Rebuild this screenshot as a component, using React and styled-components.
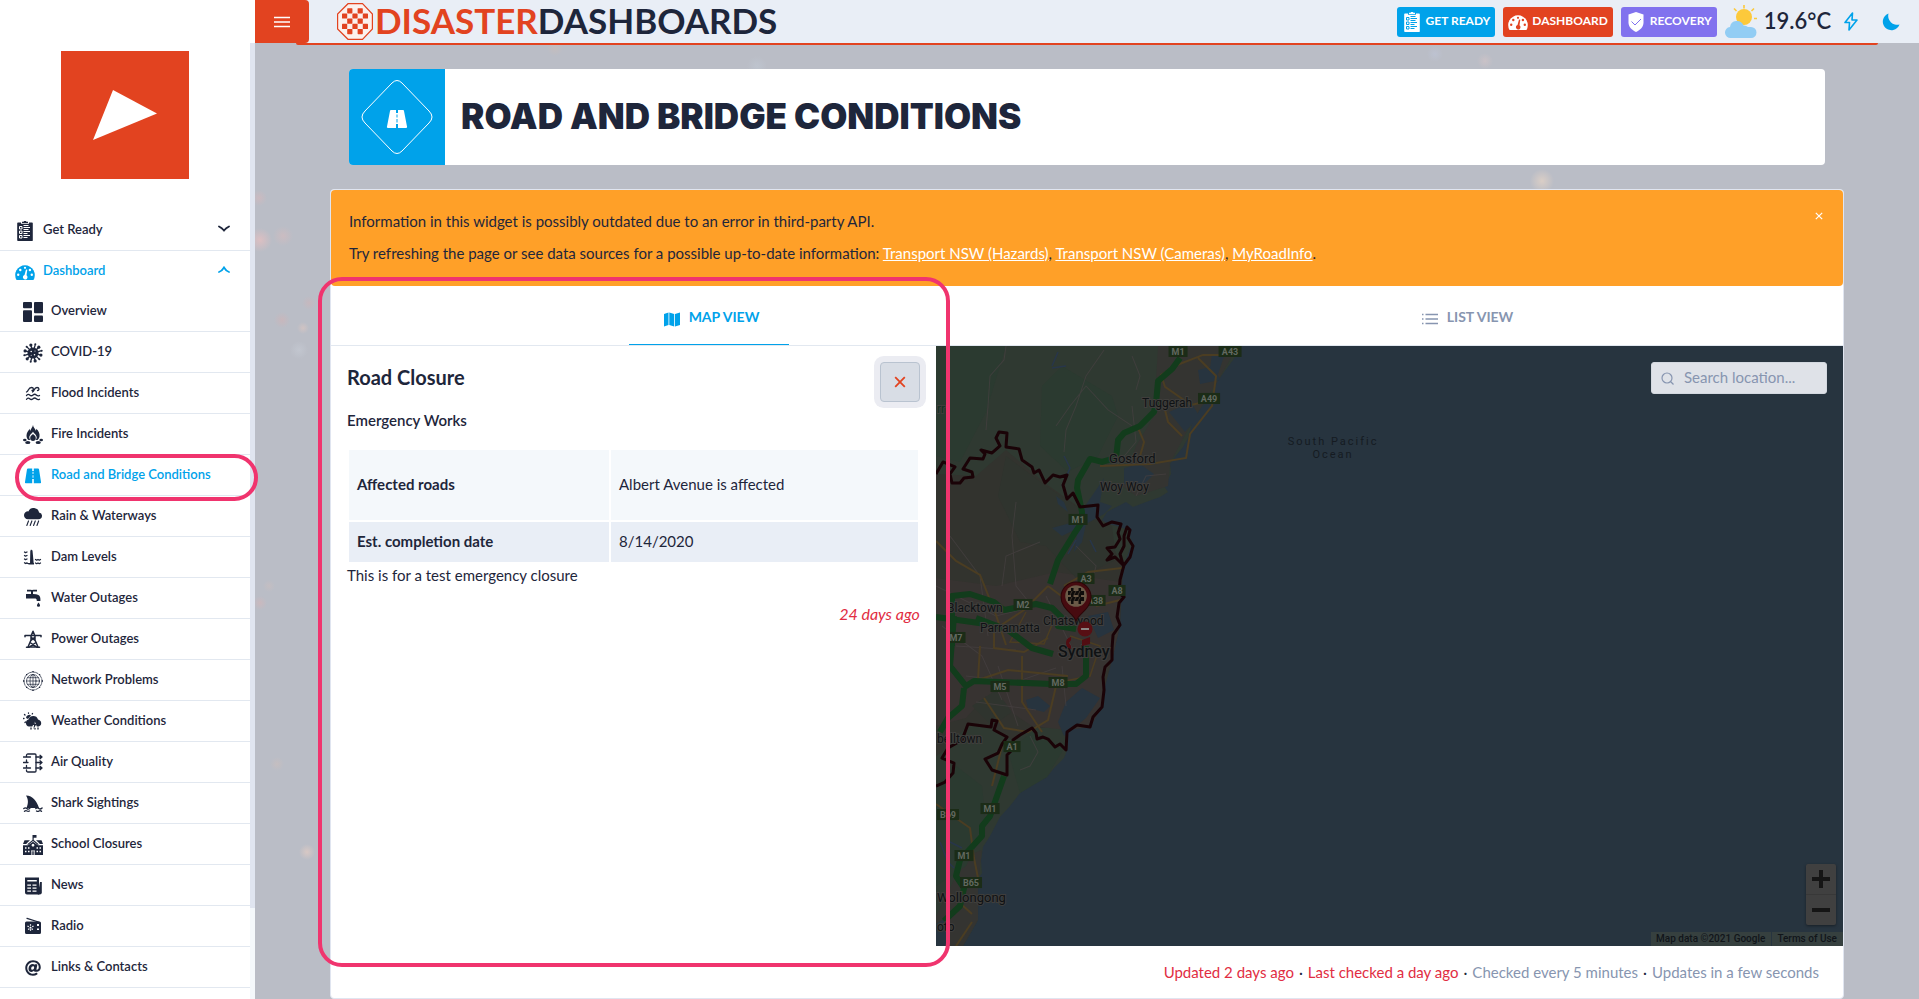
import React from "react";
import styled, { createGlobalStyle, css } from "styled-components";
import { FaAt } from "react-icons/fa";
import { BsCloudRainHeavyFill } from "react-icons/bs";

const c = {
  ink: "#1e263b",
  red: "#e24320",
  blue: "#00a2ea",
  purple: "#8172ee",
  pale: "#e9eef6",
  line: "#e2e8f0",
  muted: "#8795b0",
  danger: "#e12d42",
  orange: "#ffa028",
  pink: "#f0346e",
};

const GlobalStyle = createGlobalStyle`
  *, *::before, *::after { box-sizing: border-box; }
  body {
    margin: 0;
    font-family: Lato, "Liberation Sans", sans-serif;
    font-size: 15px;
    line-height: 20px;
    color: ${c.ink};
  }
  h1, h2, h3, p, ul { margin: 0; padding: 0; }
  ul { list-style: none; }
  button, input { font: inherit; color: inherit; }
  button { border: 0; padding: 0; background: none; cursor: pointer; }
  a { color: inherit; text-decoration: none; }
  svg { display: block; flex: none; }
`;

const Shell = styled.div`
  display: flex;
  height: 100vh;
  overflow: hidden;
`;

/* ---------- sidebar ---------- */
const Sidebar = styled.aside`
  position: relative;
  z-index: 2;
  width: 255px;
  flex: none;
  background: #fff;
`;
const SidebarBody = styled.div`
  display: flex;
  height: 100%;
`;
const SidebarContent = styled.div`
  flex: 1;
  padding-top: 51px;
`;
const Brand = styled.a`
  display: block;
  width: 128px;
  margin: 0 auto 31px;
`;
const ScrollTrack = styled.div`
  width: 5px;
  margin-top: 43px;
  background: #f4f8fb;
`;
const ScrollThumb = styled.div`
  height: calc(90% + 5px);
  background: #e0e5f0;
`;
const NavItem = styled.li`
  position: relative;
  border-bottom: ${(p) => (p.$open ? "0" : `1px solid ${c.line}`)};
`;
const NavLink = styled.a`
  display: flex;
  align-items: center;
  gap: 8px;
  height: 40px;
  padding: 0 20px 2px ${(p) => (p.$top ? "15px" : "23px")};
  font-size: 13px;
  font-weight: 600;
  color: ${(p) => (p.$active ? c.blue : c.ink)};
`;
const NavIcon = styled.span`
  display: flex;
  align-items: center;
  justify-content: center;
  width: 20px;
  height: 20px;
  margin-top: 4px;
`;
const NavText = styled.span`
  flex: 1;
`;

const highlight = css`
  content: "";
  position: absolute;
  border: 4px solid ${c.pink};
  border-radius: 24px;
  pointer-events: none;
  z-index: 5;
`;
const MarkedNavItem = styled(NavItem)`
  &::after {
    ${highlight}
    inset: -1px -8px -6px 15px;
  }
`;

/* ---------- main ---------- */
const Main = styled.div`
  flex: 1;
  min-width: 0;
  background:
    radial-gradient(circle at 5px 240px, #dcbfc2 0, #dcbfc200 12px),
    radial-gradient(circle at 28px 236px, #cbbcc1 0, #cbbcc100 10px),
    radial-gradient(circle at 4px 198px, #cbbac0 0, #cbbac000 8px),
    radial-gradient(circle at 27px 320px, #c8b7bc 0, #c8b7bc00 8px),
    radial-gradient(circle at 48px 328px, #d0c3c3 0, #d0c3c300 6px),
    radial-gradient(circle at 54px 303px, #c6b8be 0, #c6b8be00 7px),
    radial-gradient(circle at 44px 350px, #c2c6cf 0, #c2c6cf00 9px),
    radial-gradient(circle at 5px 603px, #cab9be 0, #cab9be00 7px),
    radial-gradient(circle at 14px 586px, #c4bec2 0, #c4bec200 6px),
    radial-gradient(circle at 52px 852px, #d8c8c4 0, #d8c8c400 8px),
    radial-gradient(circle at 22px 764px, #c5bec0 0, #c5bec000 7px),
    radial-gradient(circle at 1287px 181px, #dacec6 0, #dacec600 12px),
    radial-gradient(circle at 1230px 61px, #cac2c7 0, #cac2c700 8px),
    radial-gradient(circle at 1180px 54px, #bdc2d1 0, #bdc2d100 8px),
    radial-gradient(circle at 502px 66px, #bec4ce 0, #bec4ce00 10px),
    radial-gradient(circle at 300px 48px, #c4bdbe 0, #c4bdbe00 8px),
    #babdc6;
`;
const TopBar = styled.header`
  position: relative;
  display: flex;
  align-items: center;
  height: 43px;
  padding-right: 16px;
  background: ${c.pale};
  &::after {
    content: "";
    position: absolute;
    left: 41px;
    right: 41px;
    top: 100%;
    height: 2px;
    border-radius: 0 0 3px 3px;
    background: ${c.red};
  }
`;
const MenuButton = styled.button`
  display: flex;
  align-items: center;
  justify-content: center;
  width: 54px;
  height: 43px;
  border-radius: 0 4px 4px 0;
  background: ${c.red};
`;
const Wordmark = styled.a`
  display: flex;
  align-items: center;
  gap: 2px;
  margin-left: 28px;
  margin-right: auto;
  font-size: 35px;
  line-height: 38px;
  font-weight: 700;
`;
const WordmarkText = styled.span`
  padding-bottom: 4px;
`;
const Accent = styled.span`
  color: ${c.red};
`;
const HeaderTools = styled.div`
  display: flex;
  align-items: center;
  gap: 8px;
`;
const Pill = styled.a`
  display: flex;
  align-items: center;
  gap: 4px;
  height: 30px;
  padding: 0 5px;
  border-radius: 3px;
  color: #fff;
  background: ${(p) => p.$tone};
  font-size: 12px;
  font-weight: 700;
`;
const PillText = styled.span`
  padding-bottom: 2px;
`;
const Weather = styled.div`
  display: flex;
  align-items: center;
  gap: 7px;
  font-size: 22px;
  font-weight: 600;
`;
const IconButton = styled.button`
  display: flex;
  align-items: center;
  justify-content: center;
  width: 24px;
  height: 30px;
  color: ${c.blue};
  margin-left: ${(p) => (p.$spaced ? "8px" : "0")};
`;

const PageTitle = styled.div`
  display: flex;
  align-items: center;
  margin: 26px 94px 24px;
  border-radius: 4px;
  overflow: hidden;
  background: #fff;
`;
const TitleIcon = styled.div`
  display: flex;
  align-items: center;
  justify-content: center;
  width: 96px;
  height: 96px;
  background: ${c.blue};
`;
const TitleText = styled.h1`
  padding: 0 0 2px 16px;
  font-family: Inter, "Liberation Sans", sans-serif;
  font-size: 35px;
  line-height: 40px;
  font-weight: 900;
`;

const Card = styled.section`
  margin: 0 75px;
  border: 1px solid #e0e5f0;
  border-radius: 4px;
  background: #fff;
`;
const Alert = styled.div`
  display: flex;
  justify-content: space-between;
  align-items: flex-start;
  height: 96px;
  padding: 15px 20px 16px 18px;
  border-radius: 4px;
  background: ${c.orange};
`;
const AlertText = styled.div`
  line-height: 32px;
  a { color: #fff; text-decoration: underline; }
`;
const AlertClose = styled.button`
  display: flex;
  align-items: center;
  height: 22px;
  color: #fff;
`;
const Tabs = styled.div`
  display: grid;
  grid-template-columns: 1fr 1fr;
  justify-items: center;
  height: 60px;
  border-bottom: 1px solid ${c.line};
`;
const Tab = styled.button`
  display: flex;
  align-items: center;
  justify-content: center;
  gap: 9px;
  width: 160px;
  height: 59px;
  padding: 3px 0 0 5px;
  font-size: 14px;
  font-weight: 700;
  color: ${(p) => (p.$active ? c.blue : c.muted)};
  border-bottom: 1px solid ${(p) => (p.$active ? c.blue : "transparent")};
  svg { margin-top: 5px; }
`;
const Split = styled.div`
  display: grid;
  grid-template-columns: 2fr 3fr;
  height: 600px;
`;
const Detail = styled.article`
  position: relative;
  padding: 16px;
  &::after {
    ${highlight}
    inset: -69px -14px -21px -13px;
  }
`;
const DetailHead = styled.div`
  display: flex;
  justify-content: space-between;
  align-items: flex-start;
`;
const DetailTitle = styled.h2`
  font-size: 20px;
  line-height: 30px;
  font-weight: 700;
`;
const CloseButton = styled.button`
  display: flex;
  align-items: center;
  justify-content: center;
  width: 40px;
  height: 40px;
  border: 1px solid #b9c3d0;
  border-radius: 4px;
  background: #d8dde5;
  box-shadow: 0 0 0 6px #ebecf2;
  color: ${c.red};
`;
const DetailSub = styled.h3`
  margin: 8px 0 18px;
  font-size: 15px;
  line-height: 20px;
  font-weight: 600;
`;
const Facts = styled.table`
  width: 100%;
  border-spacing: 2px;
  text-align: left;
`;
const FactRow = styled.tr`
  height: ${(p) => (p.$tall ? "70px" : "40px")};
  background: ${(p) => (p.$tall ? "#f4f8fb" : c.pale)};
  th { width: 260px; font-weight: 700; }
  th, td { padding: 0 8px 2px; }
`;
const Note = styled.p`
  margin-top: 1px;
`;
const Ago = styled.p`
  margin-top: 19px;
  text-align: right;
  font-size: 16px;
  font-style: italic;
  color: ${c.danger};
`;

const MapPane = styled.div`
  position: relative;
  background: #27343f;
  overflow: hidden;
`;
const MapDrawing = styled.svg`
  width: 100%;
  height: 100%;
  font-family: Roboto, sans-serif;
`;
const Search = styled.label`
  position: absolute;
  top: 16px;
  right: 16px;
  display: flex;
  align-items: center;
  gap: 10px;
  width: 176px;
  height: 32px;
  padding: 0 9px;
  border: 1px solid #d3d8df;
  border-radius: 3px;
  background: #dfe2e8;
  color: ${c.muted};
`;
const SearchInput = styled.input`
  flex: 1;
  min-width: 0;
  border: 0;
  padding: 0 0 2px;
  outline: 0;
  background: none;
  &::placeholder { color: ${c.muted}; opacity: 1; }
`;
const ZoomControl = styled.div`
  position: absolute;
  right: 7px;
  bottom: 21px;
  width: 30px;
  border-radius: 2px;
  background: #404040;
  box-shadow: 0 1px 3px #0006;
`;
const ZoomButton = styled.button`
  display: flex;
  align-items: center;
  justify-content: center;
  width: 30px;
  height: 30px;
  & + & { height: 31px; border-top: 1px solid #383838; }
`;
const Attribution = styled.div`
  position: absolute;
  right: 0;
  bottom: 0;
  display: flex;
  gap: 1px;
  font: 500 10px/14px Roboto, sans-serif;
  color: #11151a;
  span, a { padding: 0 6px 0 5px; background: #36403f; }
`;
const Footer = styled.footer`
  display: flex;
  justify-content: flex-end;
  align-items: center;
  gap: 5px;
  height: 52px;
  padding: 0 24px;
`;
const Status = styled.span`
  color: ${(p) => (p.$late ? c.danger : c.muted)};
`;

/* ---------- icons ---------- */
const Svg = ({ s = 20, children, ...rest }) => (
  <svg width={s} height={s} viewBox="0 0 20 20" fill="currentColor" aria-hidden="true" {...rest}>
    {children}
  </svg>
);
const stroke = { fill: "none", stroke: "currentColor", strokeWidth: 1.3, strokeLinecap: "round", strokeLinejoin: "round" };

const Checklist = ({ cut = "#fff" }) => (
  <Svg>
    <path d="M3 1.500h3v1.300h8V1.500h3a.8.800 0 0 1 .8.800v17a.7.700 0 0 1-.8.700H3a.8.800 0 0 1-.8-.800V2.300a.8.800 0 0 1 .8-.800zM7 .800h1.500L9.200 0h1.600l.7.800H13v1.300H7z" />
    <g fill="none" stroke={cut} strokeWidth="1">
      <path d="M4.500 5.500h2.500v2.500h-2.500zM4.500 10h2.500v2.500h-2.500zM4.500 14.500h2.500V17h-2.500z" />
      <path d="M8.500 4.500h5M8.500 6.500h6.500M8.500 8.500h5M8.500 10.500h6.500M8.500 12.500h4M8.500 14.500h6.500M8.500 16.500h4" />
    </g>
  </Svg>
);
const Gauge = ({ cut = "#fff" }) => (
  <Svg>
    <path d="M1.500 18A9.800 9.800 0 1 1 18.500 18z" />
    <g fill={cut}>
      <circle cx="10" cy="5.800" r="1.100" />
      <circle cx="5.300" cy="8" r="1.200" />
      <circle cx="14.900" cy="8" r="1.200" />
      <circle cx="3.200" cy="12.800" r="1.200" />
      <circle cx="16.800" cy="12.800" r="1.200" />
      <path d="M11 7.500l1.300.300-.8 5.500a2.300 2.300 0 1 1-2-.3z" />
    </g>
  </Svg>
);
const Tiles = () => (
  <Svg>
    <rect width="9" height="6.300" rx="1" />
    <rect y="8.300" width="9" height="11.700" rx="1" />
    <rect x="11" width="9" height="11.300" rx="1" />
    <rect x="11" y="13.500" width="9" height="6.500" rx="1" />
  </Svg>
);
const spikes = Array.from({ length: 12 }, (_, i) => {
  const a = (i * Math.PI) / 6 + 0.26;
  const r = i % 2 ? 9 : 8.2;
  return [10 + r * Math.cos(a), 10 + r * Math.sin(a), i % 2 ? 1 : 1.6];
});
const Virus = () => (
  <Svg>
    <circle cx="10" cy="10" r="5.500" />
    {spikes.map(([x, y, r]) => (
      <g key={x + y * 100}>
        <path d={`M10 10L${x} ${y}`} stroke="currentColor" strokeWidth="1.300" />
        <circle cx={x} cy={y} r={r} />
      </g>
    ))}
    <g fill="#fff">
      <circle cx="8.200" cy="8.500" r=".8" />
      <circle cx="12" cy="8" r=".5" />
      <circle cx="11.500" cy="11.800" r=".8" />
      <circle cx="8.200" cy="12.300" r=".5" />
    </g>
  </Svg>
);
const Flood = () => (
  <Svg>
    <g {...stroke}>
      <path d="M3.500 8C6 7 5 3.500 8.500 3.500c2.500 0 2.500 3 .5 3M9.500 8c2-1 1.500-4.500 4.500-4.500 2.500 0 2.500 3 .5 3" />
      <path d="M3.500 11.500q1.600-2 3.200-.5t3.300 0 3.300 0 3.200 .5M3.500 15.300q1.600-2 3.200-.5t3.300 0 3.300 0 3.200.5" />
    </g>
  </Svg>
);
const Fire = () => (
  <Svg>
    <path d="M10 0c.3 2.500 2.200 3.500 2.800 5.700.5-.6.500-1.200.4-1.900 2.300 2 3.800 4.500 3.300 7.700-.2 1.500-1 2.700-2 3.500H5.500c-1.200-1-2-2.300-2-4.200 0-2.700 1.500-4.700 3.200-7 0 .9.100 1.500.6 2C7.800 3.800 9.500 2.500 10 0z" />
    <path d="M10 6.500c.5 1.800 3.700 3.200 3.700 6A3.600 3.600 0 0 1 12.500 15h-5a3.600 3.600 0 0 1-1.200-2.500c0-2.800 3.200-4.200 3.700-6z" fill="#fff" />
    <path d="M10 9c1.500 1.200 2.800 2.200 2.800 4.200 0 1.700-1.200 2.800-2.800 2.800s-2.800-1.100-2.800-2.800C7.200 11.200 8.500 10.200 10 9z" />
    <ellipse cx="1.800" cy="15" rx="1.800" ry="1.300" />
    <ellipse cx="18.200" cy="15" rx="1.800" ry="1.300" />
    <ellipse cx="4.800" cy="17.500" rx="2.600" ry="1.500" />
    <ellipse cx="15.200" cy="17.500" rx="2.600" ry="1.500" />
  </Svg>
);
const Road = () => (
  <Svg>
    <path d="M5 2.500h4.200V5h1.600V2.500H15a1 1 0 0 1 1 .8L18 16a1 1 0 0 1-1 1.300h-6.200V13H9.200v4.300H3A1 1 0 0 1 2 16L4 3.300a1 1 0 0 1 1-.8z" />
    <path d="M9.200 5.800h1.600V8H9.200zM9.200 9.300h1.600v2.500H9.200z" fill="#fff" opacity=".55" />
  </Svg>
);
const Dam = () => (
  <Svg>
    <path d="M7.300 3l.7-1.500 1.500 1 1.300 14H7zM2 15h9v1.500H6z" />
    <path {...stroke} d="M1.500 4l1 .7 1.500-.7M1.500 7.500l1 .7 1.500-.7M1.500 11l1 .7L4 11M1.500 14.800l1 .7 1.500-.7M12.500 11.500l1.200.7 1.300-.7 1.300.7 1.200-.7M12.500 15l1.200.7 1.300-.7 1.300.7 1.200-.7" />
  </Svg>
);
const Tap = () => (
  <Svg>
    <path d="M4 .8h3.500l1.500.3 1.500-.3H14v1.800h-3.500l-.5-.1V5l3 .3c2.700.2 4.400 1.700 4.400 4.500v2.300h-3.600c0-2-.6-2.600-2.300-2.600H3V5h5V2.500l-.5.100H4zM15.500 13.500q3.200 4.200 0 4.200t0-4.200z" />
  </Svg>
);
const Pylon = () => (
  <Svg>
    <path {...stroke} strokeWidth="1.500" d="M8 6l2-4.800L12 6M2 5.500h16M2 5.500v1.300M18 5.500v1.300M8 6v4l-3 7h10l-3-7V6M8 7l4 3.500M12 7l-4 3.500M7 12.500l6 4M13 12.500l-6 4M3.500 17.300h3M13.500 17.300h3" />
  </Svg>
);
const Network = () => (
  <Svg>
    <g {...stroke} strokeWidth=".7">
      <circle cx="10" cy="10" r="6.500" />
      <circle cx="10" cy="10" r="9" strokeDasharray="5 1" />
      <ellipse cx="10" cy="10" rx="3" ry="6.500" />
      <path d="M10 3.500v13M3.500 10h13M4.500 6.700h11M4.500 13.300h11" />
    </g>
    <path d="M9.300 0h1.400v1.300H9.300zM9.300 18.700h1.400V20H9.300zM0 9.300h1.300v1.400H0zM18.700 9.300H20v1.400h-1.300zM3 3h1.200v1.200H3zM16 3h1.200v1.200H16zM3 15.800h1.200V17H3zM16 15.800h1.200V17H16z" />
  </Svg>
);
const Storm = () => (
  <Svg>
    <path d="M6 14.500a3.600 3.600 0 0 1-.5-7A5 5 0 0 1 15 7.500c3.600.5 4.600 5.800.8 7h-2l-2-5-2.500 5zM3 6a3.500 3.500 0 0 1 5-2.800L5 7z" />
    <path d="M11.500 8.500l-2 4.500h1.500l-.5 4 3-5h-1.700z" />
    <path {...stroke} d="M5.500 .8v.5M1.500 2.500l.5.500M.5 6.500H1M9.500 1.500l-.3.500M2 10.500l.5-.5M8 16v1M15 16v1M12 16.500v.5" />
  </Svg>
);
const Air = () => (
  <Svg>
    <g {...stroke}>
      <path d="M3.500 3.500V2.500q0-1.500 1.500-1.500h7q1 0 1 1v16q0 1-1 1H5q-1.500 0-1.500-1.500v-.5" />
      <path d="M.5 4h7M.5 9.500H5M.5 15h7M3.500 7v2.500M3.500 12.500V15M13 4h6M13 9.500h6M13 15h6M17 2.300L19 4l-2 1.700M17 7.800l2 1.700-2 1.700M17 13.300l2 1.700-2 1.700" />
    </g>
  </Svg>
);
const Shark = () => (
  <Svg>
    <path d="M3 1.500c7 .5 10.500 5 13 12.500H3.500C5.500 9 5.500 5.500 3 1.500z" />
    <path {...stroke} d="M.8 14.500q1.600-1.300 3 0t3 0M12.800 14.500q1.500-1.300 3 0t3.300-.5M1.500 17.300q1.300-1 2.500-.3T6.500 17M13.500 17q1.300.8 2.500 0t2.500.3" />
  </Svg>
);
const School = () => (
  <Svg>
    <path d="M9.500 0h4v2.700h-2.800V5l5 4.200-.8.900L10 6l-4.900 4.100-.8-.9L9.500 5zM1.500 5.200H7L3.500 8.500V9H0zM18.500 5.200H13l3.500 3.300V9H20z" />
    <path fillRule="evenodd" d="M0 10.300h5L10 6.800l5 3.500h5V20h-8v-4.500H8V20H0zM2 12.300v1.500h1.500v-1.500zM5 12.300v1.500h1.500v-1.500zM2 15.800v1.500h1.500v-1.500zM5 15.800v1.500h1.500v-1.500zM13.500 12.300v1.500H15v-1.500zM16.500 12.300v1.500H18v-1.500zM13.500 15.800v1.500H15v-1.500zM16.500 15.800v1.500H18v-1.500zM10 8.800a1.400 1.400 0 1 0 .01 0z" />
    <path d="M8.600 16.200h1.100V20H8.600zM10.300 16.200h1.100V20h-1.100z" />
  </Svg>
);
const News = () => (
  <Svg>
    <path fillRule="evenodd" d="M2 1.500h14v17H4a2 2 0 0 1-2-2zM4.300 4v1.500h9.500V4zM4.300 8.500v1.300h3.700V8.500zM9.500 8.500v1.300h4V8.500zM4.300 11.500v1.300h3.700v-1.300zM9.500 11.500v1.300h4v-1.300zM4.300 14.500v1.300h3.700v-1.300zM9.500 14.500v1.300h4v-1.300z" />
    <path d="M17 6h1.800v10.500a2 2 0 0 1-2 2h-2z" />
  </Svg>
);
const Radio = () => (
  <Svg>
    <path {...stroke} d="M4 1.300L15.500 5" />
    <path fillRule="evenodd" d="M3.500 4.500h13A1.500 1.500 0 0 1 18 6v9.500a1.500 1.500 0 0 1-1.500 1.500h-13A1.500 1.500 0 0 1 2 15.500V6a1.500 1.500 0 0 1 1.500-1.500zM14 7v2h2V7zM14 11.500v1.500h2v-1.500z" />
    <path d="M7.500 7.300v7M4.500 9l6 4M10.500 9l-6 4" stroke="#fff" strokeWidth="1.200" strokeDasharray="1.500 1" />
  </Svg>
);
const Chevron = ({ up }) => (
  <svg width="12" height="8" viewBox="0 0 12 8" fill="none" stroke="currentColor" strokeWidth="1.800" strokeLinecap="round" aria-hidden="true">
    <path d={up ? "M1 6q3-1 5-4.500 2 3.500 5 4.500" : "M1 1.500q3 1.500 5 4 2-2.500 5-4"} />
  </svg>
);
const Cross = ({ s }) => (
  <svg width={s} height={s} viewBox="0 0 10 10" stroke="currentColor" strokeWidth="1.500" aria-hidden="true">
    <path d="M1 1l8 8M9 1L1 9" />
  </svg>
);
const BrandMark = () => (
  <svg width="128" height="128" viewBox="0 0 128 128" role="img" aria-label="Home">
    <path fill={c.red} d="M0 0h128v128H0z" />
    <path fill="#fff" d="M52 39l44 23.500-64 26.500z" />
  </svg>
);
const cells = Array.from({ length: 25 }, (_, i) => [i % 5, Math.floor(i / 5)]).filter(([q, r]) => (q + r) % 2 === 1);
const Octagon = () => (
  <svg width="36" height="37" viewBox="0 0 36 37" fill={c.red} aria-hidden="true">
    <path d="M11 .700h14.500L35.400 11v15L25.500 36.300H11L.6 26V11z" fill="#fbf1ee" stroke={c.red} strokeWidth="1.200" />
    {cells.map(([q, r]) => (
      <rect key={`${q}-${r}`} x={5 + q * 5.2} y={5.2 + r * 5.2} width="5.200" height="5.200" rx=".6" />
    ))}
  </svg>
);
const SunCloud = () => (
  <svg width="32" height="34" viewBox="0 0 32 34" aria-hidden="true">
    <path stroke="#fcc93b" strokeWidth="1.600" d="M19 0v3.500M9 3.500l2.500 2.500M29 3.500L26.500 6M32 13.500h-3" />
    <circle cx="19" cy="12" r="8" fill="#fcc93b" />
    <path fill="#92cdf4" d="M6 33a5.500 5.500 0 0 1-1-11 7 7 0 0 1 13.500-1.500A6 6 0 0 1 23 22h3a5.500 5.500 0 0 1 0 11z" />
  </svg>
);
const Shield = () => (
  <Svg>
    <path d="M10 0l7.500 2.500v8c0 4.500-3.300 7.500-7.500 9.500-4.200-2-7.500-5-7.500-9.500v-8z" />
    <path d="M5.500 9.500l3.500 3.500 6-6" fill="none" stroke={c.purple} />
  </Svg>
);
const Bolt = () => (
  <svg width="14" height="19" viewBox="0 0 14 19" fill="none" stroke="currentColor" strokeWidth="1.600" strokeLinejoin="round" aria-hidden="true">
    <path d="M8.500 1L1 10.500h4.500L5 18l8-10H8z" />
  </svg>
);
const Moon = () => (
  <svg width="18" height="18" viewBox="0 0 18 18" fill="currentColor" aria-hidden="true">
    <path d="M6.500 .5a9 9 0 0 0 11 11A8.600 8.600 0 1 1 6.500.5z" />
  </svg>
);
const MapIcon = () => (
  <svg width="16" height="15" viewBox="0 0 16 15" fill="currentColor" aria-hidden="true">
    <path d="M0 2l4.500-1.500V13L0 14.500zM5.300 .5l4.900 1.500v12.500L5.300 13zM11 2l5-1.500V13l-5 1.500z" />
  </svg>
);
const ListIcon = () => (
  <svg width="16" height="12" viewBox="0 0 16 12" stroke="currentColor" strokeWidth="1.300" aria-hidden="true">
    <path d="M0 1.500h1.500M3.500 1.500H16M0 6h1.500M3.500 6H16M0 10.500h1.500M3.500 10.500H16" />
  </svg>
);

/* ---------- map ---------- */
const RouteSign = ({ x, y, t, w = 19 }) => (
  <g>
    <rect x={x - w / 2} y={y - 6} width={w} height="11" fill="#1b2c17" />
    <text x={x} y={y + 3} textAnchor="middle" fontSize="9" fontWeight="700" fill="#626960">{t}</text>
  </g>
);
const Town = ({ x, y, s = 12, children, weight = 400, fill = "#0f1214" }) => (
  <text x={x} y={y} fontSize={s} fontWeight={weight} fill={fill} stroke="#3f3e3c" strokeWidth="2" paintOrder="stroke">
    {children}
  </text>
);
const COAST =
  "M0 0H306L297 14 288 26 281 36 276 50 266 60 257 74 252 92 247 101 238 112 234 118 235 128 228 140 232 146 224 151 210 156 197 161 190 156 171 166 165 176 184 181 192 184 196 197 192 208 187 221 184 247 182 262 184 279 177 292 177 301 175 316 167 331 168 344 166 357 157 371 154 381 141 379 131 386 132 402 128 412 118 422 111 431 98 438 84 447 74 460 64 471 54 490 47 501 45 515 46 527 38 540 36 561 42 574 34 588 27 600H0Z";
const BOUNDARY =
  "M0 128L7 116 19 121 14 128 16 137 24 137 28 132 37 131 36 126 27 123 34 112 47 113 49 108 45 104 56 107 64 100 60 92 63 86 71 87 70 101 83 103 86 114 96 121 98 127 103 124 109 137 117 129 124 131 131 129 127 139 131 153 137 147 144 161 162 159 161 171 167 180 176 176 185 178 182 187 184 193 179 201 171 202 176 208 171 214 179 211 187 219 184 208 188 200 188 190 191 181 194 184 192 192 197 200 194 211 188 219 184 234 183 247 188 251 183 257 181 271 184 279 177 289 176 302 176 314 169 321 167 331 168 344 166 361 157 371 154 381 141 379 131 386 130 404 124 398 119 401 112 393 107 391 101 393 100 387 96 382 84 389 77 394 79 401 71 409 71 429 56 424 49 413 62 407 66 398 71 391 58 384 61 375 56 374 55 381 32 378 26 394 12 402 6 412 18 417 17 427 9 436 0 440";
const CoastMap = () => (
  <MapDrawing viewBox="0 0 907 600" preserveAspectRatio="xMidYMid slice" role="img" aria-label="Map of Sydney region">
    <path fill="#27343f" d="M0 0h907v600H0z" />
    <path fill="#2f3931" d={COAST} />
    <path fill="#32332e" d="M0 128L40 130 70 104 110 138 144 162 167 182 187 221 184 279 176 314 168 344 154 381 96 382 77 394 55 381 32 378 12 402 0 410Z" />
    <path fill="#373331" d="M0 232L60 240 120 226 184 236 184 279 176 314 167 331 166 361 154 381 130 384 96 380 50 350 30 372 0 380Z" />
    <path fill="#343431" d="M222 0H302L281 36 257 74 234 117 232 140 200 150 186 140 200 100 218 70ZM0 570L30 510 46 504 42 540 42 574 27 600H0Z" />
    <path fill="#2b3a30" d="M0 0H70L50 66 24 116 0 110ZM106 40L126 20 176 50 182 70 162 110 132 126 104 100ZM0 440L20 420 46 440 50 480 30 520 0 540ZM72 405L96 386 128 402 111 431 84 447Z" />
    <path fill="#2f342e" d="M70 110L110 140 140 160 176 180 180 214 140 232 110 200 84 196 62 150ZM36 360L60 344 76 366 56 380Z" />
    <g fill="#27343f">
      <path d="M233 66L255 56 263 70 249 86ZM188 122L204 118 218 128 206 140 188 138ZM262 24L278 20 284 34 264 38ZM276 8L288 10 282 28 274 22Z" />
      <path d="M130 356L146 342 164 352 150 372 128 390 122 376ZM90 354L102 350 114 360 108 366 92 362ZM152 270L172 266 178 284 162 292ZM0 578L12 570 10 600H0Z" />
      <path d="M160 144L168 132 164 156 176 160 168 168 150 178 146 196 138 206 142 182 126 190 116 182 138 176ZM120 150L128 156 132 166 122 158Z" />
    </g>
    <g fill="none" stroke="#28364a" strokeWidth="1.500">
      <path d="M116 20l6-14M116 22l14-2M128 110l6 12-8 18M4 496l8 20 6 6M10 494l16 8M132 208l8-14M160 206l-6-12" />
    </g>
    <g fill="none" stroke="#474142" strokeWidth="1" opacity=".7">
      <path d="M70 0L68 14 54 30 52 60 50 84M120 80L134 60 150 40 172 64 196 80M196 10L204 30 200 44M128 106L130 84 140 60 150 30 168 4M14 190L44 230 52 290M80 156L76 190 80 240 96 260M0 240L60 270 100 260M140 200L160 220 156 236M30 330L80 336 120 322M94 390L102 406 94 420 84 424M20 300L80 304" />
      <path d="M62 320L82 380M126 320L130 360M40 356L100 364M110 250L140 310M6 280L46 310 66 354M104 196L70 210 66 240M180 120L200 96 196 60M200 150L210 130 230 128" />
    </g>
    <g fill="none" stroke="#4b3d22" strokeWidth="2">
      <path d="M297 9H267L241 19 225 29 229 41 255 59 273 55M262 12L280 30 276 60 254 88 250 112 214 118 164 120M228 60L232 76 246 90M202 82L208 96 204 110M0 195L20 215 44 229 60 269 70 299M112 240L128 252M112 240L88 264 58 284V302L88 306 112 292M186 222L152 226 128 240M160 260L184 254M44 300L42 334 72 324 132 330M86 310V356L106 386M120 340L112 374 92 386 68 382 48 352M0 458L34 482 38 512 44 542M36 576L20 600M14 548L36 568M66 400L56 440" />
      <path d="M90 266L74 296 108 298 118 274M134 290L164 300 154 330 114 338" strokeWidth="1.500" />
    </g>
    <g fill="none" stroke="#123c1c" strokeWidth="6" strokeLinejoin="round">
      <path d="M244 12L236 23 222 35 220 57 218 66 204 80 188 87 182 94 180 112 166 116 154 113 142 134 141 142 146 166V176L138 188 122 214 114 238" />
      <path d="M0 271L50 278M16 300V250L34 248 58 256 68 264 100 258 116 262 126 272 122 280 140 283M40 272L72 284 96 302 117 308" />
      <path d="M18 270L14 320 30 340 38 335 116 338 140 338 150 330V300M28 342L26 360 12 372 4 386M68 430L54 470 46 480V490L24 514 20 530 28 542 24 560 8 575" />
    </g>
    <path d={BOUNDARY} fill="none" stroke="#1a0307" strokeWidth="3" strokeLinejoin="round" />
    <RouteSign x={242} y={6} t="M1" />
    <RouteSign x={294} y={6} t="A43" w={23} />
    <RouteSign x={273} y={53} t="A49" w={22} />
    <RouteSign x={142} y={174} t="M1" />
    <RouteSign x={150} y={233} t="A3" w={17} />
    <RouteSign x={181} y={245} t="A8" w={17} />
    <RouteSign x={159} y={255} t="A38" w={21} />
    <RouteSign x={87} y={259} t="M2" />
    <RouteSign x={20} y={292} t="M7" />
    <RouteSign x={64} y={341} t="M5" />
    <RouteSign x={122} y={337} t="M8" />
    <RouteSign x={76} y={401} t="A1" w={17} />
    <RouteSign x={54} y={463} t="M1" />
    <RouteSign x={12} y={469} t="B69" w={22} />
    <RouteSign x={28} y={510} t="M1" />
    <RouteSign x={35} y={537} t="B65" w={22} />
    <Town x={206} y={61}>Tuggerah</Town>
    <Town x={173} y={117} s={13}>Gosford</Town>
    <Town x={164} y={145}>Woy Woy</Town>
    <Town x={11} y={266}>Blacktown</Town>
    <Town x={44} y={286}>Parramatta</Town>
    <Town x={107} y={279}>Chatswood</Town>
    <Town x={122} y={311} s={16} weight={500}>Sydney</Town>
    <Town x={1} y={397}>belltown</Town>
    <Town x={1} y={556} s={13}>Wollongong</Town>
    <Town x={1} y={585}>oto</Town>
    <Town x={1} y={67} fill="#12301f">rr</Town>
    <g fill="#151b22" fontSize="11" textAnchor="middle" letterSpacing="2">
      <text x="397" y="99">South Pacific</text>
      <text x="397" y="112">Ocean</text>
    </g>
    <g fill="#520d12">
      <path d="M130 297a6 6 0 0 1 5-6v3l-2 3 2 3v3a6 6 0 0 1-5-6zM146 294l8-3v7l-8 2z" />
      <circle cx="149" cy="283" r="7.500" fill="#570f14" />
      <path d="M145 282h8v2h-8z" fill="#8a8583" />
      <path fill="#470b10" stroke="#2c0608" d="M140 275c-2-7-15-12-15-24a15 15 0 0 1 30 0c0 12-13 17-15 24z" />
      <circle cx="140" cy="250" r="10.800" fill="#6b5a47" />
      <path fill="#0e0c0b" d="M132 245h16v4h-16zM132 251h16v4h-16zM135 242h2.500v16H135zM142.500 242h2.500v16h-2.500z" />
      <path stroke="#6b5a47" strokeWidth=".6" d="M134 249l2-4M138 249l2-4M142 249l2-4M134 255l2-4M138 255l2-4M142 255l2-4" />
    </g>
  </MapDrawing>
);

const items = [
  ["Overview", <Tiles />],
  ["COVID-19", <Virus />],
  ["Flood Incidents", <Flood />],
  ["Fire Incidents", <Fire />],
  ["Road and Bridge Conditions", <Road />, true],
  ["Rain & Waterways", <BsCloudRainHeavyFill size={18} />],
  ["Dam Levels", <Dam />],
  ["Water Outages", <Tap />],
  ["Power Outages", <Pylon />],
  ["Network Problems", <Network />],
  ["Weather Conditions", <Storm />],
  ["Air Quality", <Air />],
  ["Shark Sightings", <Shark />],
  ["School Closures", <School />],
  ["News", <News />],
  ["Radio", <Radio />],
  ["Links & Contacts", <FaAt size={16} />],
];

export default function App() {
  return (
    <>
      <GlobalStyle />
      <Shell>
        <Sidebar>
          <SidebarBody>
            <SidebarContent>
              <Brand href="#home"><BrandMark /></Brand>
              <nav>
                <ul>
                  <NavItem>
                    <NavLink href="#ready" $top>
                      <NavIcon><Checklist /></NavIcon>
                      <NavText>Get Ready</NavText>
                      <Chevron />
                    </NavLink>
                  </NavItem>
                  <NavItem $open>
                    <NavLink href="#dashboard" $top $active>
                      <NavIcon><Gauge /></NavIcon>
                      <NavText>Dashboard</NavText>
                      <Chevron up />
                    </NavLink>
                  </NavItem>
                  {items.map(([label, icon, active]) => {
                    const Item = active ? MarkedNavItem : NavItem;
                    return (
                      <Item key={label}>
                        <NavLink href={`#${label}`} $active={active}>
                          <NavIcon>{icon}</NavIcon>
                          <NavText>{label}</NavText>
                        </NavLink>
                      </Item>
                    );
                  })}
                </ul>
              </nav>
            </SidebarContent>
            <ScrollTrack><ScrollThumb /></ScrollTrack>
          </SidebarBody>
        </Sidebar>

        <Main>
          <TopBar>
            <MenuButton aria-label="Toggle menu">
              <svg width="16" height="12" viewBox="0 0 16 12" stroke="#fff" strokeWidth="1.500" aria-hidden="true">
                <path d="M0 1.500h16M0 6h16M0 10.500h16" />
              </svg>
            </MenuButton>
            <Wordmark href="#home">
              <Octagon />
              <WordmarkText><Accent>DISASTER</Accent>DASHBOARDS</WordmarkText>
            </Wordmark>
            <HeaderTools>
              <Pill href="#ready" $tone={c.blue}><Checklist cut={c.blue} /><PillText>GET READY</PillText></Pill>
              <Pill href="#dashboard" $tone={c.red}><Gauge cut={c.red} /><PillText>DASHBOARD</PillText></Pill>
              <Pill href="#recovery" $tone={c.purple}><Shield /><PillText>RECOVERY</PillText></Pill>
              <Weather><SunCloud /><PillText>19.6°C</PillText></Weather>
              <IconButton aria-label="Power alerts"><Bolt /></IconButton>
              <IconButton aria-label="Dark mode" $spaced><Moon /></IconButton>
            </HeaderTools>
          </TopBar>

          <PageTitle>
            <TitleIcon>
              <svg width="72" height="74" viewBox="0 0 72 74" aria-hidden="true">
                <path fill="none" stroke="#fff" d="M31 3q5-5 10 0l27 28q6 6 0 12L41 71q-5 5-10 0L4 43q-6-6 0-12z" />
                <path fill="#fff" d="M30 30h5v3h2v-3h5a1 1 0 0 1 1 1l3 15.500a1 1 0 0 1-1 1.500h-8v-4h-2v4h-8a1 1 0 0 1-1-1.500L29 31a1 1 0 0 1 1-1z" />
                <path fill={c.blue} d="M35.500 34.500h1v3h-1zM35.500 39h1v3.500h-1z" />
              </svg>
            </TitleIcon>
            <TitleText>ROAD AND BRIDGE CONDITIONS</TitleText>
          </PageTitle>

          <Card>
            <Alert role="alert">
              <AlertText>
                <p>Information in this widget is possibly outdated due to an error in third-party API.</p>
                <p>
                  Try refreshing the page or see data sources for a possible up-to-date information:{" "}
                  <a href="#hazards">Transport NSW (Hazards)</a>, <a href="#cameras">Transport NSW (Cameras)</a>,{" "}
                  <a href="#myroadinfo">MyRoadInfo</a>.
                </p>
              </AlertText>
              <AlertClose aria-label="Dismiss"><Cross s={8} /></AlertClose>
            </Alert>
            <Tabs role="tablist">
              <Tab role="tab" aria-selected="true" $active><MapIcon />MAP VIEW</Tab>
              <Tab role="tab" aria-selected="false"><ListIcon />LIST VIEW</Tab>
            </Tabs>
            <Split>
              <Detail>
                <DetailHead>
                  <DetailTitle>Road Closure</DetailTitle>
                  <CloseButton aria-label="Close"><Cross s={12} /></CloseButton>
                </DetailHead>
                <DetailSub>Emergency Works</DetailSub>
                <Facts>
                  <tbody>
                    <FactRow $tall><th scope="row">Affected roads</th><td>Albert Avenue is affected</td></FactRow>
                    <FactRow><th scope="row">Est. completion date</th><td>8/14/2020</td></FactRow>
                  </tbody>
                </Facts>
                <Note>This is for a test emergency closure</Note>
                <Ago>24 days ago</Ago>
              </Detail>
              <MapPane>
                <CoastMap />
                <Search>
                  <svg width="13" height="13" viewBox="0 0 13 13" fill="none" stroke="currentColor" strokeWidth="1.200" aria-hidden="true">
                    <circle cx="6" cy="6" r="5" />
                    <path d="M9.500 9.500l3 3" />
                  </svg>
                  <SearchInput aria-label="Search location" placeholder="Search location..." />
                </Search>
                <ZoomControl>
                  <ZoomButton aria-label="Zoom in">
                    <svg width="18" height="18" viewBox="0 0 18 18" fill="#151515" aria-hidden="true"><path d="M7 0h4v7h7v4h-7v7H7v-7H0V7h7z" /></svg>
                  </ZoomButton>
                  <ZoomButton aria-label="Zoom out">
                    <svg width="18" height="4" viewBox="0 0 18 4" fill="#151515" aria-hidden="true"><path d="M0 0h18v4H0z" /></svg>
                  </ZoomButton>
                </ZoomControl>
                <Attribution>
                  <span>Map data ©2021 Google</span>
                  <a href="#terms">Terms of Use</a>
                </Attribution>
              </MapPane>
            </Split>
            <Footer>
              <Status $late>Updated 2 days ago</Status>·
              <Status $late>Last checked a day ago</Status>·
              <Status>Checked every 5 minutes</Status>·
              <Status>Updates in a few seconds</Status>
            </Footer>
          </Card>
        </Main>
      </Shell>
    </>
  );
}
